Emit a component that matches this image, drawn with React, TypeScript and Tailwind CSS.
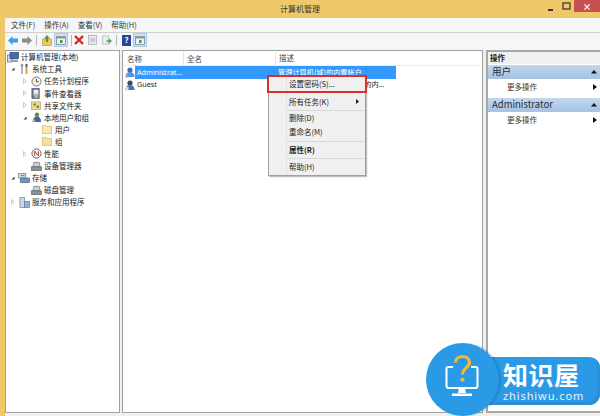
import React from 'react'

const font = { fontFamily: '"Noto Sans CJK SC", "Noto Sans", sans-serif' }
const latin = { fontFamily: '"Noto Sans", sans-serif' }

function Folder({ open }: { open?: boolean }) {
  return (
    <svg width="10" height="9" viewBox="0 0 10 9">
      <path d="M0.500 0.500h3.500l1 1h4.500v7h-9z" fill={open ? '#f9e8ad' : '#f6e09a'} stroke="#dcbc68" strokeWidth="0.8" />
    </svg>
  )
}

function PcIcon() {
  return (
    <svg width="12" height="11" viewBox="0 0 12 11">
      <rect x="0.500" y="3" width="5" height="7" fill="#d5d9de" stroke="#5b6b80" strokeWidth="0.7" />
      <rect x="3" y="0.500" width="8.500" height="6" fill="#3f6fb5" stroke="#2a3f66" strokeWidth="0.7" />
      <rect x="4" y="7.500" width="7" height="2.500" fill="#9aa5b3" />
    </svg>
  )
}

function Tools() {
  return (
    <svg width="9" height="12" viewBox="0 0 9 12">
      <path d="M2 1v10M2 1L1 3M2 1l1 2" stroke="#8a8f96" strokeWidth="1.300" fill="none" />
      <path d="M6.500 1v3" stroke="#555" strokeWidth="2" />
      <path d="M6.500 4v7" stroke="#d8a33f" strokeWidth="2" />
    </svg>
  )
}

function Clock() {
  return (
    <svg width="11" height="11" viewBox="0 0 12 12">
      <circle cx="6" cy="6" r="5" fill="#f1efe6" stroke="#77726a" />
      <path d="M6 3v3.200h2.400" stroke="#444" fill="none" />
    </svg>
  )
}

function EventLog() {
  return (
    <svg width="10" height="11" viewBox="0 0 11 12">
      <rect x="1" y="0.500" width="8" height="11" fill="#5d7db0" stroke="#3a4d70" strokeWidth="0.7" />
      <rect x="3" y="2" width="5" height="6" fill="#f2f2f2" />
      <rect x="4" y="6" width="3.500" height="5" fill="#e2b13c" />
    </svg>
  )
}

function Share() {
  return (
    <svg width="10" height="10" viewBox="0 0 11 11">
      <rect x="0.500" y="2" width="10" height="8.500" fill="#efd98a" stroke="#b69b4a" strokeWidth="0.7" />
      <circle cx="4" cy="5" r="1.400" fill="#5c9a4a" />
      <circle cx="7.500" cy="7.500" r="1.400" fill="#4877b8" />
    </svg>
  )
}

function Users() {
  return (
    <svg width="11" height="11" viewBox="0 0 12 12">
      <circle cx="6.500" cy="3" r="2.500" fill="#6c8e3f" />
      <path d="M2 11c0-4 2-6 4.500-6s4.500 2 4.500 6z" fill="#3d66a8" />
      <path d="M1 11l2-4 2 4z" fill="#d6b04a" />
    </svg>
  )
}

function Perf() {
  return (
    <svg width="11" height="11" viewBox="0 0 12 12">
      <circle cx="6" cy="6" r="5" fill="#f6f6f6" stroke="#555" />
      <path d="M4 8.500V3.500l4 5V3.500" stroke="#c8281e" fill="none" />
    </svg>
  )
}

function Device() {
  return (
    <svg width="11" height="10" viewBox="0 0 12 11">
      <path d="M3 1.500h6l1 5H2z" fill="#c9cfd6" stroke="#5d6670" strokeWidth="0.7" />
      <rect x="0.500" y="6.500" width="11" height="4" fill="#8a939c" stroke="#4f5760" strokeWidth="0.7" />
    </svg>
  )
}

function Storage() {
  return (
    <svg width="12" height="10" viewBox="0 0 13 11">
      <rect x="0.500" y="0.500" width="8" height="5" fill="#d5dde5" stroke="#66788a" strokeWidth="0.7" />
      <rect x="2.500" y="5.500" width="10" height="5" fill="#6f93bb" stroke="#4a627d" strokeWidth="0.7" />
      <rect x="3" y="2" width="4" height="1.500" fill="#4fae5a" />
    </svg>
  )
}

function Services() {
  return (
    <svg width="11" height="11" viewBox="0 0 12 12">
      <rect x="1" y="0.500" width="5" height="11" fill="#cfd7e0" stroke="#6c7a8a" strokeWidth="0.7" />
      <rect x="6" y="5" width="5.500" height="6.500" fill="#8fb0d4" stroke="#5a7799" strokeWidth="0.7" />
    </svg>
  )
}

function OpenArrow() {
  return (
    <svg width="4" height="4" viewBox="0 0 5 5">
      <path d="M4.500 0.500v4h-4z" fill="#444" />
    </svg>
  )
}

function ClosedArrow() {
  return (
    <svg width="4" height="6" viewBox="0 0 5 7">
      <path d="M0.500 0.500l3.500 3-3.500 3z" fill="#fff" stroke="#a0a0a0" strokeWidth="0.7" />
    </svg>
  )
}

function UserRowIcon({ guest }: { guest?: boolean }) {
  return (
    <svg className="shrink-0" width="10" height="11" viewBox="0 0 10 11">
      <circle cx="5" cy="3" r="2.600" fill={guest ? '#3f4a5c' : '#3f6fc0'} />
      <path d="M0.500 10c0-3.500 2-5 4.500-5s4.500 1.500 4.500 5z" fill={guest ? '#4a70b5' : '#5a8fd8'} />
      <rect x="1" y="7" width="2.500" height="3.500" fill={guest ? '#e0e0e0' : '#7fa7de'} />
    </svg>
  )
}

type TreeItem = { label: string; indent: string; arrow?: 'open' | 'closed'; icon: React.ReactNode; selected?: boolean }

const tree: TreeItem[] = [
  { label: '计算机管理(本地)', indent: 'ml-[-6px]', icon: <PcIcon /> },
  { label: '系统工具', indent: 'ml-[5px]', arrow: 'open', icon: <Tools /> },
  { label: '任务计划程序', indent: 'ml-[17px]', arrow: 'closed', icon: <Clock /> },
  { label: '事件查看器', indent: 'ml-[17px]', arrow: 'closed', icon: <EventLog /> },
  { label: '共享文件夹', indent: 'ml-[17px]', arrow: 'closed', icon: <Share /> },
  { label: '本地用户和组', indent: 'ml-[17px]', arrow: 'open', icon: <Users /> },
  { label: '用户', indent: 'ml-[28px]', icon: <Folder open />, selected: true },
  { label: '组', indent: 'ml-[28px]', icon: <Folder /> },
  { label: '性能', indent: 'ml-[17px]', arrow: 'closed', icon: <Perf /> },
  { label: '设备管理器', indent: 'ml-[17px]', icon: <Device /> },
  { label: '存储', indent: 'ml-[5px]', arrow: 'open', icon: <Storage /> },
  { label: '磁盘管理', indent: 'ml-[17px]', icon: <Device /> },
  { label: '服务和应用程序', indent: 'ml-[5px]', arrow: 'closed', icon: <Services /> },
]

function TreeRow({ item }: { item: TreeItem }) {
  return (
    <div className={`flex h-[12.1px] items-center ${item.indent}`}>
      <div className="flex w-[7px] shrink-0 items-center">
        {item.arrow === 'open' && <OpenArrow />}
        {item.arrow === 'closed' && <ClosedArrow />}
      </div>
      <div className="flex w-[12px] shrink-0 items-center justify-center">{item.icon}</div>
      <span className={`ml-[1px] whitespace-nowrap px-[1px] ${item.selected ? 'bg-[#f5f5f5]' : ''}`}>{item.label}</span>
    </div>
  )
}

function ActionHeader({ label }: { label: string }) {
  return (
    <div className="flex h-[14px] items-center justify-between bg-gradient-to-b from-[#c3d7ec] to-[#a5c2e0] pl-1 pr-[3px] text-[9.500px] text-[#1f2d3d]">
      <span>{label}</span>
      <svg width="6" height="4" viewBox="0 0 6 4">
        <path d="M3 0l3 3.500H0z" fill="#111" />
      </svg>
    </div>
  )
}

function ActionLink() {
  return (
    <div className="mt-px flex h-[13px] items-center justify-between pl-[19px] pr-[3px] text-[#333]">
      <span>更多操作</span>
      <svg width="4" height="6" viewBox="0 0 4 6">
        <path d="M0 0l4 3-4 3z" fill="#111" />
      </svg>
    </div>
  )
}

function ContextMenu() {
  return (
    <div className="absolute left-[268px] top-[75px] w-[98px] border border-[#a0a0a0] bg-[#f0f0f0] text-[#222] shadow-[1px_1px_1px_rgba(0,0,0,0.25)]">
      <div className="absolute bottom-0 left-[17px] top-0 w-px bg-[#e2e2e2]" />
      <div className="flex h-[16px] items-center pl-[20px]">设置密码(S)...</div>
      <div className="ml-[18px] h-px bg-[#d8d8d8]" />
      <div className="flex h-[17px] items-center justify-between pl-[20px] pr-[6px]">
        <span>所有任务(K)</span>
        <svg width="3" height="5" viewBox="0 0 3 5">
          <path d="M0 0l3 2.500L0 5z" fill="#222" />
        </svg>
      </div>
      <div className="ml-[18px] h-px bg-[#d8d8d8]" />
      <div className="flex h-[14px] items-center pl-[20px]">删除(D)</div>
      <div className="mb-[2px] flex h-[14px] items-center pl-[20px]">重命名(M)</div>
      <div className="ml-[18px] h-px bg-[#d8d8d8]" />
      <div className="flex h-[16px] items-center pl-[20px] font-bold">属性(R)</div>
      <div className="ml-[18px] h-px bg-[#d8d8d8]" />
      <div className="flex h-[16px] items-center pl-[20px]">帮助(H)</div>
      <div className="absolute left-[-2px] top-[-1px] h-[18px] w-[100px] border-2 border-[#d8302c]" />
    </div>
  )
}

function Watermark() {
  return (
    <div className="absolute bottom-0 left-[425px] right-0 top-[343px] overflow-hidden">
      <div className="absolute bottom-[11px] left-[40px] right-0 h-[48px] rounded-r-[11px] bg-[#2a9ae6] shadow-[inset_-3px_-3px_0_#2a8fd6]" />
      <div className="absolute left-[1px] top-0 h-[73px] w-[73px] rounded-full bg-[#2a9ae6] shadow-[2px_0_2px_rgba(0,60,120,0.25)]" />
      <svg className="absolute left-[18px] top-[10px]" width="40" height="48" viewBox="0 0 40 48">
        <path d="M10 14H5.500a2 2 0 0 0-2 2v17a2 2 0 0 0 2 2h27a2 2 0 0 0 2-2V16a2 2 0 0 0-2-2H28" fill="none" stroke="#fff" strokeWidth="2" />
        <path d="M16 35h6l1 5h-8z M9 40.500h20v2.500H9z" fill="#fff" />
        <path d="M12.500 9.500c0-8 14-8 14 0 0 5-7 5.500-7 12" fill="none" stroke="#f5b92e" strokeWidth="3.200" />
        <rect x="17.700" y="25" width="3.600" height="3.600" fill="#f5b92e" />
      </svg>
      <div className="absolute left-[78px] top-[17px] text-[25px] font-bold leading-[28px] tracking-[0.5px] text-white">知识屋</div>
      <div className="absolute left-[78px] top-[47px] text-[11px] leading-[11px] tracking-[0.9px] text-[#e6f3fd]" style={latin}>zhishiwu.com</div>
    </div>
  )
}

export default function App() {
  return (
    <div className="relative flex h-[416px] w-[600px] flex-col overflow-hidden bg-[#f0c868] pl-[5px] text-[7.500px] leading-none text-[#222]" style={font}>
      <div className="relative flex h-[18px] shrink-0 items-center justify-center text-[8px] text-[#333]">
        <span className="ml-[-5px]">计算机管理</span>
        <div className="absolute right-0 top-0 flex h-3 items-center">
          <svg className="mr-[8px] mt-[3px]" width="7" height="6" viewBox="0 0 7 6">
            <rect x="1" y="4" width="5" height="2" fill="#333" />
          </svg>
          <svg className="mr-[3px]" width="9" height="8" viewBox="0 0 9 8">
            <rect x="1" y="1" width="7" height="6" fill="none" stroke="#333" strokeWidth="1.200" />
          </svg>
          <div className="flex h-3 w-[26px] items-center justify-center bg-[#c75050] text-[9px] font-bold text-white">×</div>
        </div>
      </div>

      <div className="flex h-[15px] shrink-0 items-center gap-[9px] border-b border-[#d0d0d0] bg-[#f5f6f7] pl-[6px] text-[#333]">
        <span>文件(F)</span>
        <span>操作(A)</span>
        <span>查看(V)</span>
        <span>帮助(H)</span>
      </div>

      <div className="flex h-[17px] shrink-0 items-center bg-[#f5f6f7] pb-[3px] pl-[3px]">
        <svg width="10" height="9" viewBox="0 0 10 9">
          <path d="M0 4.500L4.500 0v2.500H10v4H4.500V9z" fill="#3aa0e0" />
        </svg>
        <svg className="ml-[4px]" width="10" height="9" viewBox="0 0 10 9">
          <path d="M10 4.500L5.500 0v2.500H0v4h5.500V9z" fill="#8c8c8c" />
        </svg>
        <div className="ml-[4px] h-[11px] w-px bg-[#b8b8b8]" />
        <svg className="ml-[5px]" width="10" height="11" viewBox="0 0 10 11">
          <path d="M0.500 4h9v6.500h-9z" fill="#ecc65f" stroke="#c09a3c" strokeWidth="0.7" />
          <path d="M5 0l3 3.500H6V7H4V3.500H2z" fill="#4f9a3c" />
        </svg>
        <div className="ml-[2px] flex h-[14px] w-[14px] items-center justify-center border border-[#a9cbe8] bg-[#cfe3f5]">
          <svg width="10" height="9" viewBox="0 0 10 9">
            <rect x="0.500" y="0.500" width="9" height="8" fill="#eef2f5" stroke="#6e7a86" strokeWidth="0.7" />
            <rect x="0.500" y="0.500" width="9" height="2" fill="#8a97a5" />
            <rect x="4" y="4" width="2.500" height="3" fill="#3c9a4a" />
          </svg>
        </div>
        <div className="ml-[3px] h-[11px] w-px bg-[#b8b8b8]" />
        <svg className="ml-[2px]" width="10" height="10" viewBox="0 0 10 10">
          <path d="M1 1l8 8M9 1L1 9" stroke="#d8261c" strokeWidth="2.400" />
        </svg>
        <svg className="ml-[4px]" width="10" height="10" viewBox="0 0 10 10">
          <rect x="0.500" y="0.500" width="8" height="9" fill="#e6e8ea" stroke="#a5a9ad" strokeWidth="0.7" />
          <rect x="2" y="3" width="5" height="4" fill="#c4ccd4" />
        </svg>
        <svg className="ml-[4px]" width="10" height="10" viewBox="0 0 11 10">
          <rect x="0.500" y="0.500" width="7" height="9" fill="#eceeef" stroke="#a5a9ad" strokeWidth="0.7" />
          <path d="M5 5.200h2.500V3L11 6 7.500 9V7H5z" fill="#4da34a" />
        </svg>
        <div className="ml-[4px] h-[11px] w-px bg-[#b8b8b8]" />
        <div className="ml-[5px] flex h-[11px] w-[9px] items-center justify-center bg-[#27479c] text-[8px] font-bold text-white">?</div>
        <div className="ml-[2px] flex h-[14px] w-[14px] items-center justify-center border border-[#a9cbe8] bg-[#cfe3f5]">
          <svg width="10" height="9" viewBox="0 0 10 9">
            <rect x="0.500" y="0.500" width="9" height="8" fill="#eef2f5" stroke="#6e7a86" strokeWidth="0.7" />
            <rect x="0.500" y="0.500" width="9" height="2" fill="#8a97a5" />
            <rect x="4" y="4" width="2.500" height="3" fill="#3c9a4a" />
          </svg>
        </div>
      </div>

      <div className="flex min-h-0 flex-1 gap-[2px] bg-[#f0f0f0] pb-[3px]">
        <div className="w-[115px] shrink-0 border border-[#a0a0a0] bg-white">
          {tree.map((item) => (
            <TreeRow key={item.label} item={item} />
          ))}
        </div>

        <div className="w-[361px] shrink-0 border border-[#a0a0a0] bg-white">
          <div className="flex h-[15px] items-center border-b border-[#eeeeee] text-[#444]">
            <span className="w-[61px] border-r border-[#e5e5e5] pl-[4px] leading-[13px]">名称</span>
            <span className="w-[92px] border-r border-[#e5e5e5] pl-[3px] leading-[13px]">全名</span>
            <span className="pl-[3px]">描述</span>
          </div>
          <div className="flex h-[13px] items-center pl-[2px]">
            <UserRowIcon />
            <div className="flex h-[13px] w-[261px] items-center bg-[#3399ff] text-[7.200px] text-white">
              <span className="w-[143px] pl-[2px]" style={latin}>Administrat...</span>
              <span>管理计算机(域)的内置帐户</span>
            </div>
          </div>
          <div className="flex h-3 items-center pl-[2px] text-[7.200px]">
            <UserRowIcon guest />
            <span className="w-[143px] pl-[2px]" style={latin}>Guest</span>
            <span className="whitespace-nowrap">供来宾访问计算机或访问域的内...</span>
          </div>
        </div>

        <div className="ml-px min-w-0 flex-1 border-2 border-r-0 border-[#a8a8a8] bg-white">
          <div className="flex h-[12px] items-center bg-[#f0f0f0] pl-[2px] font-bold">操作</div>
          <div className="mt-px">
            <ActionHeader label="用户" />
          </div>
          <div className="mb-[5px]">
            <ActionLink />
          </div>
          <ActionHeader label="Administrator" />
          <ActionLink />
        </div>
      </div>

      <ContextMenu />
      <Watermark />
    </div>
  )
}
